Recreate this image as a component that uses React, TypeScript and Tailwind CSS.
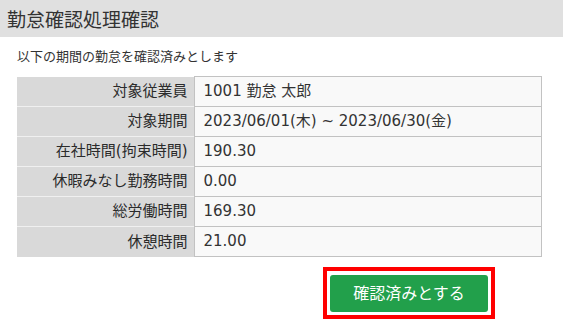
import React from 'react';

const rows: [string, string][] = [
  ['対象従業員', '1001 勤怠 太郎'],
  ['対象期間', '2023/06/01(木) ~ 2023/06/30(金)'],
  ['在社時間(拘束時間)', '190.30'],
  ['休暇みなし勤務時間', '0.00'],
  ['総労働時間', '169.30'],
  ['休憩時間', '21.00'],
];

const App = () => {
  return (
    <div
      className="w-[563px] h-[324px] bg-white text-[#333] overflow-hidden"
      style={{ fontFamily: '"DejaVu Sans", "Noto Sans CJK JP", sans-serif' }}
    >
      <div className="h-[37px] bg-[#e0e0e0] flex items-center px-[7px]">
        <h1 className="text-[19px] leading-none" style={{ fontFamily: '"Noto Sans CJK JP", sans-serif' }}>
          勤怠確認処理確認
        </h1>
      </div>

      <div className="px-[17px] pt-[12px]">
        <p className="text-[13px] leading-[16px] h-[27px]">以下の期間の勤怠を確認済みとします</p>

        <table className="w-[525px] border-collapse">
          <tbody>
            {rows.map(([label, value], i) => (
              <tr key={i} className="h-[30px]">
                <th
                  className={`w-[177px] bg-[#d9d9d9] text-right font-normal text-[15px] pr-[6px] text-[#2b2b2b] ${
                    i > 0 ? 'border-t border-[#f0f0f0]' : ''
                  }`}
                >
                  {label}
                </th>
                <td className="bg-[#f9f9f9] border border-[#c2c2c2] text-[15px] pl-[9px]">{value}</td>
              </tr>
            ))}
          </tbody>
        </table>

        <div className="flex mt-[10px] ml-[306px]">
          <div className="border-4 border-[#ff0000] p-[3px] pt-[4px]">
            <button className="w-[158px] h-[37px] rounded-[3px] bg-[#22a04b] text-white text-[16px] leading-none">
              確認済みとする
            </button>
          </div>
        </div>
      </div>
    </div>
  );
};

export default App;
